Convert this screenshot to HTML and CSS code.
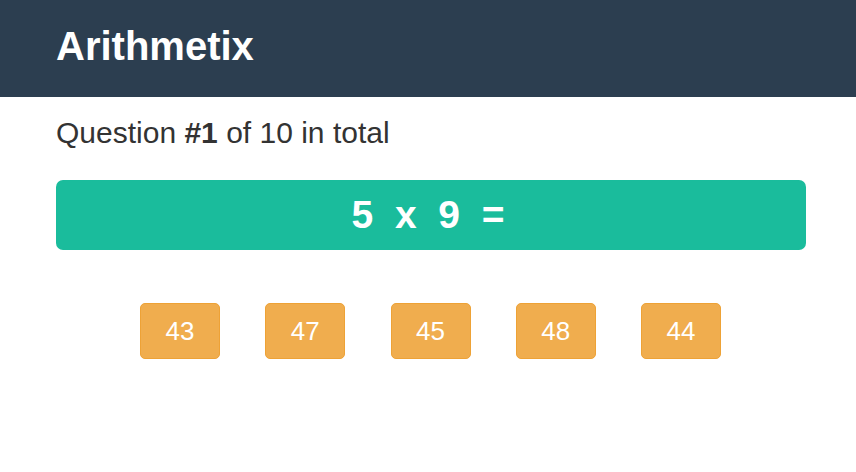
FILE: index.html
```html
<!DOCTYPE html>
<html lang="en">
<head>
<meta charset="utf-8">
<title>Arithmetix</title>
<link rel="stylesheet" href="styles.css">
</head>
<body>
<header class="navbar">
  <h1 class="brand">Arithmetix</h1>
</header>
<main class="container">
  <h3 class="question">Question <b>#1</b> of 10 in total</h3>
  <div class="equation">5&nbsp; x&nbsp; 9&nbsp; =</div>
  <div class="answers">
    <button class="answer">43</button>
    <button class="answer">47</button>
    <button class="answer">45</button>
    <button class="answer">48</button>
    <button class="answer">44</button>
  </div>
</main>
</body>
</html>
```
FILE: styles.css
```css
* { box-sizing: border-box; }
html, body { margin: 0; padding: 0; background: #fff; }
body {
  font-family: "Liberation Sans", Arial, sans-serif;
  color: #333;
}
.navbar {
  background: #2c3e50;
  height: 97px;
  padding: 24px 0 0 56px;
}
.brand {
  margin: 0;
  font-size: 40px;
  line-height: 44px;
  font-weight: bold;
  color: #fff;
}
.container {
  width: 806px;
  padding-left: 56px;
}
.question {
  margin: 19px 0 30px;
  font-size: 30px;
  line-height: 34px;
  font-weight: normal;
  color: #333;
}
.question b { font-weight: bold; }
.equation {
  background: #1abc9c;
  color: #fff;
  border-radius: 7px;
  height: 70px;
  line-height: 70px;
  font-size: 39px;
  font-weight: bold;
  text-align: center;
  padding-right: 6px;
}
.answers {
  display: flex;
  justify-content: center;
  gap: 45.25px;
  margin-top: 53px;
  padding-right: 1px;
}
.answer {
  width: 80px;
  height: 56px;
  background: #f0ad4e;
  border: 1px solid #eea236;
  border-radius: 5px;
  color: #fff;
  font-family: "Liberation Sans", Arial, sans-serif;
  font-size: 26px;
  padding: 0;
}
```
